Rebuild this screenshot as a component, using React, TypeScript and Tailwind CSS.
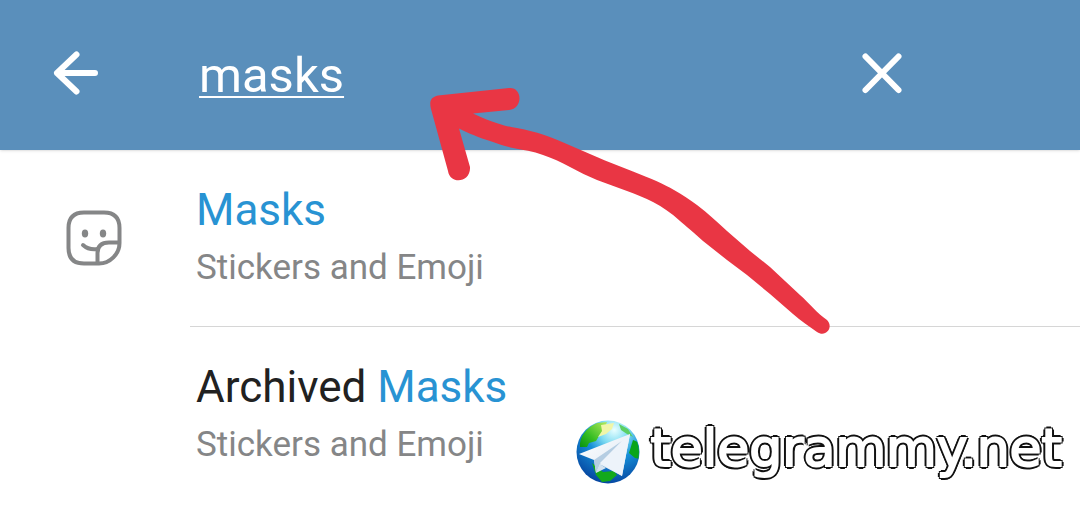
import React, { useState } from "react";

const results = [
  { id: "masks", prefix: "", match: "Masks", section: "Stickers and Emoji", icon: true },
  { id: "archived", prefix: "Archived ", match: "Masks", section: "Stickers and Emoji", icon: false },
];

function BackIcon() {
  return (
    <svg width="48" height="48" viewBox="0 0 48 48" fill="none" stroke="currentColor" strokeWidth="6" strokeLinecap="round" strokeLinejoin="round" aria-hidden="true">
      <path d="M43 24H5M24.500 5.500L5 24L24.500 42.500" />
    </svg>
  );
}

function CloseIcon() {
  return (
    <svg width="48" height="48" viewBox="0 0 48 48" fill="none" stroke="currentColor" strokeWidth="6" strokeLinecap="round" aria-hidden="true">
      <path d="M7.500 7.500L40.500 41M40.500 7.500L7.500 41" />
    </svg>
  );
}

function StickerIcon() {
  return (
    <svg width="56" height="56" viewBox="0 0 56 56" fill="none" stroke="currentColor" strokeWidth="4" strokeLinecap="round" strokeLinejoin="round" aria-hidden="true">
      <path d="M18 2.500H38Q53.500 2.500 53.500 18V33C53.500 44 44 53.500 33 53.500H18Q2.500 53.500 2.500 38V18Q2.500 2.500 18 2.500Z" />
      <path d="M53 32.500H43Q31.500 32.500 31.500 43V53" />
      <path d="M17 35Q23 40.500 32 39" />
      <ellipse cx="19" cy="23.500" rx="3.200" ry="4" fill="currentColor" stroke="none" />
      <ellipse cx="37" cy="23.500" rx="3.200" ry="4" fill="currentColor" stroke="none" />
    </svg>
  );
}

function GlobeLogo() {
  return (
    <svg width="64" height="64" viewBox="0 0 64 64" aria-hidden="true">
      <defs>
        <radialGradient id="sea" cx="0.6" cy="0.15" r="0.9">
          <stop offset="0" stopColor="#e9ffff" />
          <stop offset="0.25" stopColor="#7fdcf2" />
          <stop offset="0.5" stopColor="#168fd8" />
          <stop offset="1" stopColor="#043f9b" />
        </radialGradient>
        <linearGradient id="land" x1="1" y1="0" x2="0" y2="1">
          <stop offset="0" stopColor="#b5ea5e" />
          <stop offset="0.6" stopColor="#35bd22" />
          <stop offset="1" stopColor="#07920f" />
        </linearGradient>
        <linearGradient id="wing" x1="0" y1="0" x2="1" y2="1">
          <stop offset="0" stopColor="#ffffff" />
          <stop offset="1" stopColor="#dbe6f2" />
        </linearGradient>
        <clipPath id="ball">
          <circle cx="32" cy="32" r="31" />
        </clipPath>
      </defs>
      <circle cx="32" cy="32" r="31.500" fill="url(#sea)" />
      <g clipPath="url(#ball)">
        <path d="M4 27C3 17 11 7 21 3L31 2L28 9L30 12L23 16L20 21L13 23L11 27Z" fill="url(#land)" />
        <path d="M25 5L38 3L36 9L30 14L22 17L26 11Z" fill="#f0f6a8" />
        <path d="M43 4L52 9L57 17L51 14L45 10Z" fill="#5ccf64" />
        <path d="M57 20L64 23V39L59 38L53 33Z" fill="#09a51a" />
        <path d="M16 43L27 52L38 51L41 55L34 61L26 62L20 55Z" fill="#13a91b" />
      </g>
      <path d="M3 34L54 14L46 56L25 45L20 53L18 40Z" fill="url(#wing)" />
      <path d="M18 40L46 21L24 44L20 53Z" fill="#b5cde2" />
      <path d="M24 44L30 48L20 53Z" fill="#d3e2ef" />
      <path d="M24 43L46 21L54 14L46 56Z" fill="#edf3fa" />
    </svg>
  );
}

// Hand-drawn pointer towards the search field
function PointerArrow() {
  return (
    <svg className="pointer-events-none absolute top-[84px] left-[428px]" width="404" height="254" viewBox="428 84 404 254" aria-hidden="true">
      <path
        fill="#e93644"
        d="M438 95.500L509 88C523 87 523 109 509 110L473 113.500C482 118 490 121 498 123.500C505 126 511 127 517 128C538 132 550 137 561 141.500L605 160.500L633 171.500C652 179 664 184 674 190C683 195 690 200 697 205C708 213 717 222 727 231L750 251L770 267L800 295C810 304 817 313 827 320C834 327 826 338 817 332C809 326 801 321 793 314L770 294L747 275L727 260L703 241C693 232 686 226 680 221C671 213 663 207 653 202C645 198 636 194 627 191L597 180C588 176 579 172 570 167C561 162 552 158 543 155C533 151 523 150 513 148C505 146 498 144 490 141C480 138 468 133 459 128.500L470 167C471 183 450 185 448 171L431 109C429 101 431 97 438 95.500Z"
      />
    </svg>
  );
}

export default function App() {
  const [query, setQuery] = useState("masks");

  return (
    <div className="relative min-h-screen overflow-hidden bg-white font-['Roboto',sans-serif]">
      {/* Search bar */}
      <header className="flex h-[150px] items-center bg-[#5a8fbb] pr-[174px] pb-1 pl-[52px] text-white shadow-sm">
        <button type="button" aria-label="Back" className="shrink-0">
          <BackIcon />
        </button>
        <input
          type="text"
          aria-label="Search settings"
          value={query}
          onChange={(e) => setQuery(e.target.value)}
          className="ml-[99px] h-20 min-w-0 flex-1 bg-transparent pt-1 text-[49px] underline decoration-2 underline-offset-4 outline-none"
        />
        <button type="button" aria-label="Clear" onClick={() => setQuery("")} className="shrink-0">
          <CloseIcon />
        </button>
      </header>

      {/* Results */}
      <ul>
        {results.map((item) => (
          <li key={item.id} className="group flex">
            <div className="flex w-[190px] shrink-0 items-center pb-0.5 pl-[66px] text-[#858687]">
              {item.icon && <StickerIcon />}
            </div>
            <a href={`#${item.id}`} className="flex h-[177px] flex-1 flex-col border-b border-[#d6d6d6] pt-8 pl-1.5 group-last:border-transparent">
              <span className="text-[44px] leading-[56px] text-[#212121]">
                {item.prefix}
                <span className="text-[#2893d3]">{item.match}</span>
              </span>
              <span className="text-[35px] leading-[60px] text-[#858687]">{item.section}</span>
            </a>
          </li>
        ))}
      </ul>

      <PointerArrow />

      {/* Watermark */}
      <div className="absolute right-[18px] bottom-6 flex items-center gap-2.5">
        <GlobeLogo />
        <span className="pb-2 font-['DejaVu_Sans',sans-serif] text-[52px] leading-[64px] text-white [-webkit-text-stroke:2px_white] [text-shadow:3px_0_#111,-3px_0_#111,0_3px_#111,0_-3px_#111,2px_2px_#111,-2px_2px_#111,2px_-2px_#111,-2px_-2px_#111]">
          telegrammy.net
        </span>
      </div>
    </div>
  );
}
